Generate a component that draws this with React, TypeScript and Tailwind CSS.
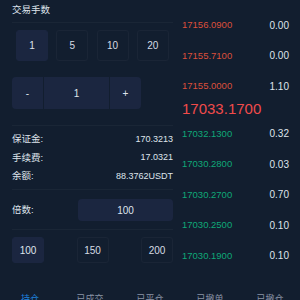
const asks = [
  { price: "17156.0900", qty: "0.00" },
  { price: "17155.7100", qty: "0.00" },
  { price: "17155.0000", qty: "1.10" },
];

const bids = [
  { price: "17032.1300", qty: "0.32" },
  { price: "17030.2800", qty: "0.03" },
  { price: "17030.2700", qty: "0.70" },
  { price: "17030.2500", qty: "0.10" },
  { price: "17030.1900", qty: "0.10" },
];

const tabs = ["持仓", "已成交", "已平仓", "已撤单", "已撤仓"];

function Chip({ label, active, h }: { label: string; active?: boolean; h: string }) {
  return (
    <div
      className={`flex w-[32px] items-center justify-center rounded-[3px] border text-[10px] ${h} ${
        active ? "border-[#1b2640] bg-[#1b2640] text-[#dfe4ec]" : "border-[#1a2536] text-[#d5dbe4]"
      }`}
    >
      {label}
    </div>
  );
}

export default function App() {
  return (
    <div
      className="h-[300px] w-[300px] overflow-hidden bg-[#121e2f] text-[#dfe4ec]"
      style={{ fontFamily: '"Liberation Sans", "Noto Sans CJK SC", sans-serif' }}
    >
      <div className="flex">
        {/* Left: order form */}
        <div className="ml-[12px] flex w-[161px] flex-col">
          <div className="mt-[4px] h-[12px] text-[9.5px] leading-[12px]">交易手数</div>
          <div className="mt-[6px] h-px bg-[#1a2636]" />

          <div className="mt-[7px] flex justify-around">
            <Chip label="1" active h="h-[31px]" />
            <Chip label="5" h="h-[31px]" />
            <Chip label="10" h="h-[31px]" />
            <Chip label="20" h="h-[31px]" />
          </div>

          <div className="mt-[16px] flex h-[32px] w-[129px] gap-px text-[10px] text-[#dfe4ec]">
            <div className="flex w-[31px] items-center justify-center rounded-l-[4px] bg-[#1b2640]">-</div>
            <div className="flex flex-1 items-center justify-center bg-[#1b2640]">1</div>
            <div className="flex w-[31px] items-center justify-center rounded-r-[4px] bg-[#1b2640]">+</div>
          </div>

          <div className="mt-[16px] h-px bg-[#1a2636]" />

          <div className="flex flex-col pt-[4px] text-[9.5px]">
            <div className="flex h-[18.5px] items-center justify-between">
              <span>保证金:</span>
              <span className="text-[9px]">170.3213</span>
            </div>
            <div className="flex h-[18.5px] items-center justify-between">
              <span>手续费:</span>
              <span className="text-[9px]">17.0321</span>
            </div>
            <div className="flex h-[18.5px] items-center justify-between">
              <span>余额:</span>
              <span className="text-[9px]">88.3762USDT</span>
            </div>
          </div>

          <div className="mt-[3.5px] h-px bg-[#1a2636]" />

          <div className="mt-[9px] flex h-[22px] items-center justify-between text-[9.5px]">
            <span>倍数:</span>
            <div className="flex h-full w-[95px] items-center justify-center rounded-[4px] bg-[#1b2640] text-[10px]">
              100
            </div>
          </div>

          <div className="mt-[8px] h-px bg-[#1a2636]" />

          <div className="mt-[7px] flex justify-between">
            <Chip label="100" active h="h-[26px]" />
            <Chip label="150" h="h-[26px]" />
            <Chip label="200" h="h-[26px]" />
          </div>
        </div>

        {/* Right: order book */}
        <div className="ml-[9px] flex w-[107px] flex-col pt-[10px] text-[10px]">
          {asks.map((r) => (
            <div key={r.price} className="flex h-[30.5px] items-center justify-between">
              <span className="text-[9.5px] text-[#dc4f3b]">{r.price}</span>
              <span className="text-[#dfe4ec]">{r.qty}</span>
            </div>
          ))}
          <div className="flex h-[14px] items-center text-[15px] leading-none text-[#f04b4b]">17033.1700</div>
          <div className="mt-[3px]">
            {bids.map((r) => (
              <div key={r.price} className="flex h-[30.5px] items-center justify-between">
                <span className="text-[9.5px] text-[#0fa878]">{r.price}</span>
                <span className="text-[#dfe4ec]">{r.qty}</span>
              </div>
            ))}
          </div>
        </div>
      </div>

      {/* Tabs */}
      <div className="mt-[22px] flex text-[9px] leading-[12px]">
        {tabs.map((t, i) => (
          <div key={t} className={`w-[60px] text-center ${i === 0 ? "text-[#1e80dd]" : "text-[#8a94a6]"}`}>
            {t}
          </div>
        ))}
      </div>
    </div>
  );
}
